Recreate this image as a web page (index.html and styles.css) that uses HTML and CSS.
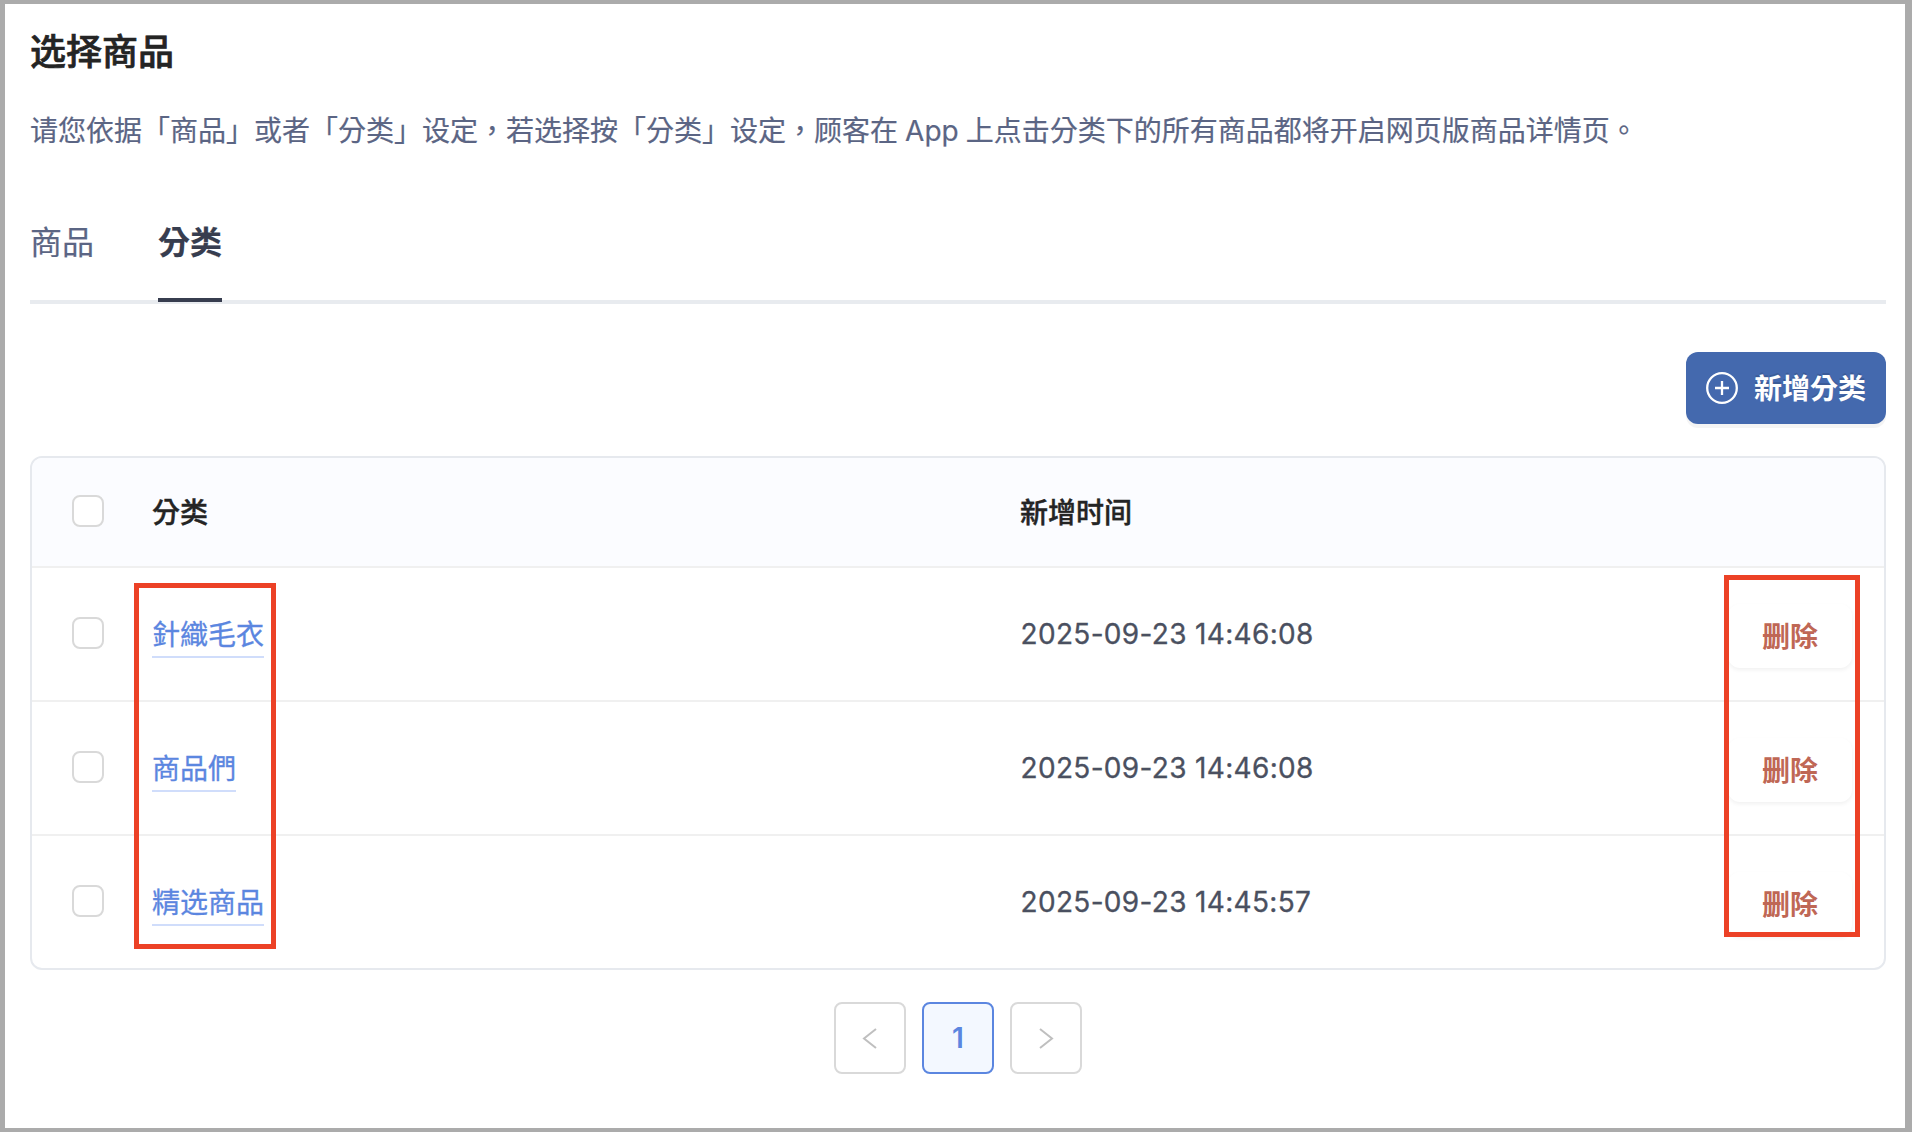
FILE: index.html
```
<!DOCTYPE html>
<html lang="zh-Hant">
<head>
<meta charset="utf-8">
<title>选择商品</title>
<link rel="stylesheet" href="styles.css">
</head>
<body>
<main class="panel">
  <h1 class="title">选择商品</h1>
  <p class="desc">请您依据「商品」或者「分类」设定，若选择按「分类」设定，顾客在 App 上点击分类下的所有商品都将开启网页版商品详情页。</p>
  <nav class="tabs">
    <a class="tab">商品</a>
    <a class="tab tab-active">分类</a>
  </nav>
  <div class="toolbar">
    <button class="add">
      <svg width="32" height="32" viewBox="0 0 32 32" fill="none" stroke="#fff" stroke-width="2.3"><circle cx="16" cy="16" r="14.8"/><path d="M16 9v14M9 16h14"/></svg>
      <span class="add-label">新增分类</span>
    </button>
  </div>
  <section class="table">
    <div class="row head">
      <span class="check"></span><span>分类</span><span>新增时间</span><span></span>
    </div>
    <div class="row">
      <span class="check"></span><span><a class="link">針織毛衣</a></span><span class="date">2025-09-23 14:46:08</span><button class="delete">删除</button>
    </div>
    <div class="row">
      <span class="check"></span><span><a class="link">商品們</a></span><span class="date">2025-09-23 14:46:08</span><button class="delete">删除</button>
    </div>
    <div class="row">
      <span class="check"></span><span><a class="link">精选商品</a></span><span class="date">2025-09-23 14:45:57</span><button class="delete">删除</button>
    </div>
    <div class="mark mark-names"></div>
    <div class="mark mark-actions"></div>
  </section>
  <nav class="pager">
    <span class="page"><svg width="24" height="24" viewBox="0 0 24 24" fill="none" stroke="#bfbfbf" stroke-width="2"><path d="M18 3 6 12.500l12 9.500"/></svg></span>
    <span class="page page-active">1</span>
    <span class="page"><svg width="24" height="24" viewBox="0 0 24 24" fill="none" stroke="#bfbfbf" stroke-width="2"><path d="M6 3 18 12.500 6 22"/></svg></span>
  </nav>
</main>
</body>
</html>
```
FILE: styles.css
```
* { box-sizing: border-box; }
body {
  margin: 0;
  height: 1132px;
  font-family: Inter, "Noto Sans CJK TC", sans-serif;
  font-size: 28px;
  line-height: 44px;
  color: #242424;
}
button { font: inherit; border: 0; margin: 0; }
.panel {
  height: 1132px;
  border: solid #ababab;
  border-width: 4px 7px 4px 5px;
  background: #fff;
  padding: 20px 19px 0 25px;
}
.title { margin: 0; font-size: 36px; font-weight: 500; line-height: 56px; -webkit-text-stroke: .7px; }
.desc { margin: 29px 0 0; color: #5b6584; white-space: nowrap; word-spacing: -.8px; -webkit-text-stroke: .2px; }
.tabs {
  display: flex;
  gap: 64px;
  height: 96px;
  margin-top: 55px;
  border-bottom: 4px solid #e8ebef;
}
.tab { height: 94px; padding-top: 10px; font-size: 32px; line-height: 50px; color: #5b6584; -webkit-text-stroke: .2px; }
.tab-active { font-weight: 700; color: #373d4f; border-bottom: 4px solid #373d4f; }
.toolbar { display: flex; justify-content: flex-end; margin-top: 48px; }
.add {
  display: flex;
  align-items: center;
  gap: 16px;
  width: 200px;
  height: 72px;
  padding: 0 20px;
  border-radius: 12px;
  background: #4469ae;
  box-shadow: 0 4px 0 rgba(0, 0, 0, .045);
  color: #fff;
  font-weight: 700;
  white-space: nowrap;
  text-shadow: 0 -2px 0 rgba(0, 0, 0, .12);
}
.add svg { flex: none; }
.add-label { padding-top: 2px; }
.table {
  position: relative;
  margin-top: 32px;
  height: 514px;
  border: 2px solid #e6e9ee;
  border-radius: 12px;
}
.row {
  display: grid;
  grid-template-columns: 80px 868px 1fr 124px;
  align-items: center;
  height: 134px;
  padding: 0 32px 0 40px;
  border-bottom: 2px solid #f0f0f0;
}
.row:nth-child(4) { height: 132px; border-bottom: 0; }
.head { height: 110px; padding-top: 2px; background: #fbfcff; border-radius: 10px 10px 0 0; font-weight: 500; -webkit-text-stroke: .4px; }
.check {
  width: 32px;
  height: 32px;
  margin-bottom: 2px;
  border: 2px solid #d9d9d9;
  border-radius: 8px;
  background: #fff;
}
.head .check { margin-bottom: 4px; }
.link { display: block; width: max-content; height: 48px; padding-top: 3px; color: #5b86e0; border-bottom: 2px solid #d0ddfb; -webkit-text-stroke: .3px; }
.date { padding-left: .5px; color: #4a5060; letter-spacing: .33px; -webkit-text-stroke: .3px; }
.delete {
  height: 64px;
  margin-top: 4px;
  padding: 2px 0 0;
  border-radius: 12px;
  background: #fff;
  box-shadow: 0 2px 4px rgba(0, 0, 0, .06);
  color: #bf6755;
  font-weight: 700;
}
.mark { position: absolute; border: 5px solid #ec4126; }
.mark-names { left: 102px; top: 125px; width: 142px; height: 366px; }
.mark-actions { left: 1692px; top: 117px; width: 136px; height: 362px; }
.pager { display: flex; justify-content: center; gap: 16px; margin-top: 32px; }
.page {
  display: flex;
  align-items: center;
  justify-content: center;
  width: 72px;
  height: 72px;
  border: 2px solid #d9d9d9;
  border-radius: 8px;
}
.page-active { border-color: #5b86e0; background: #f3f8ff; color: #5b86e0; font-weight: 600; }
```
